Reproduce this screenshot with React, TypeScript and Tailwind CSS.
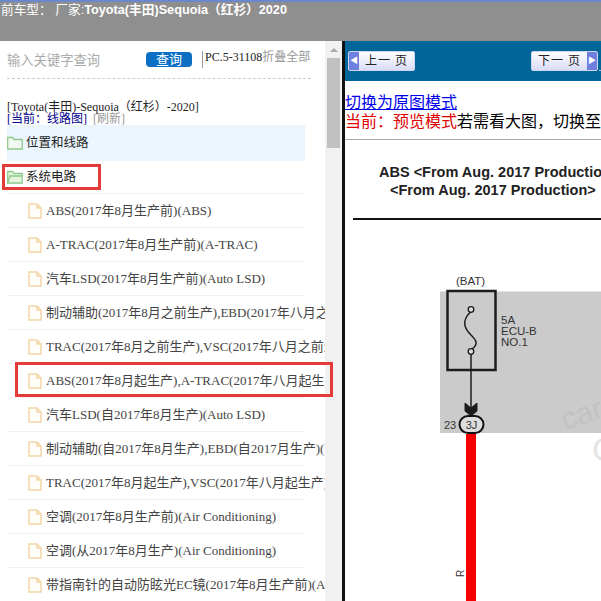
import React from "react";

const files = [
  "ABS(2017年8月生产前)(ABS)",
  "A-TRAC(2017年8月生产前)(A-TRAC)",
  "汽车LSD(2017年8月生产前)(Auto LSD)",
  "制动辅助(2017年8月之前生产),EBD(2017年八月之前生产)",
  "TRAC(2017年8月之前生产),VSC(2017年八月之前生产)",
  "ABS(2017年8月起生产),A-TRAC(2017年八月起生产)",
  "汽车LSD(自2017年8月生产)(Auto LSD)",
  "制动辅助(自2017年8月生产),EBD(自2017月生产)(EBD)",
  "TRAC(2017年8月起生产),VSC(2017年八月起生产)",
  "空调(2017年8月生产前)(Air Conditioning)",
  "空调(从2017年8月生产)(Air Conditioning)",
  "带指南针的自动防眩光EC镜(2017年8月生产前)(Auto)",
];

const FolderIcon = ({ open }: { open?: boolean }) => (
  <svg width="16" height="14" viewBox="0 0 16 14" fill="none" stroke="#8fc98f" strokeWidth="1.3" className="shrink-0">
    <path d="M.7 13V1.500h5l1.500 2h8v9.500z" fill={open ? "#e6f4dc" : "#f2f9f2"} />
    {open && <path d="M.7 13 3 6h12.300" />}
  </svg>
);

const FileIcon = () => (
  <svg width="14" height="16" viewBox="0 0 14 16" fill="none" stroke="#f3d3a4" strokeWidth="1.4" className="shrink-0">
    <path d="M1 1h8l4 4v10H1z" fill="#fffdf8" />
    <path d="M9 1v4h4" />
  </svg>
);

const PageButton = ({ label, next }: { label: string; next?: boolean }) => (
  <div className={`flex h-[20px] w-[67px] shrink-0 items-center overflow-hidden rounded-[2px] border border-[#cfd5f0] bg-gradient-to-b from-white to-[#d8dcf6] ${next ? "flex-row-reverse" : ""}`}>
    <div className="flex h-full w-[10px] items-center justify-center bg-[#6f7fe0] text-[8px] leading-none text-white">
      {next ? "▶" : "◀"}
    </div>
    <div className="flex-1 whitespace-pre text-center text-[12px] leading-none tracking-[1px] text-[#222]">{label}</div>
  </div>
);

const Diagram = () => (
  <svg width="256" height="461" viewBox="345 140 256 461" className="block" style={{ fontFamily: "'Liberation Sans', sans-serif" }}>
    <rect x="440" y="291.500" width="161" height="141.500" fill="#cbcbcb" />
    <text x="379" y="177" fontSize="14.500" fontWeight="700" fill="#222">ABS &lt;From Aug. 2017 Production</text>
    <text x="390" y="195" fontSize="14.500" fontWeight="700" fill="#222">&lt;From Aug. 2017 Production&gt;</text>
    <rect x="353" y="218" width="248" height="2" fill="#111" />
    <text x="456" y="285" fontSize="11.500" fill="#333">(BAT)</text>
    <rect x="447.500" y="291" width="48" height="79" fill="none" stroke="#1c1c1c" strokeWidth="2.500" />
    <circle cx="471" cy="309.500" r="2.800" fill="#ddd" stroke="#1c1c1c" strokeWidth="1.300" />
    <circle cx="471" cy="351.500" r="2.800" fill="#ddd" stroke="#1c1c1c" strokeWidth="1.300" />
    <path d="M470.500 312C460 322 466 330 471 335S479 344 472 349" fill="none" stroke="#1c1c1c" strokeWidth="1.500" />
    <text x="501" y="324" fontSize="11.500" fill="#333">5A</text>
    <text x="501" y="335" fontSize="11.500" fill="#333">ECU-B</text>
    <text x="501" y="346" fontSize="11.500" fill="#333">NO.1</text>
    <path d="M471 354V408" stroke="#1c1c1c" strokeWidth="1.500" />
    <path d="M465 403 471 408 477 403V411L471 416 465 411z" fill="#1c1c1c" stroke="#1c1c1c" />
    <rect x="459.500" y="416" width="24" height="17" rx="8.500" fill="#ddd" stroke="#111" strokeWidth="2" />
    <text x="471.500" y="429" textAnchor="middle" fontSize="11" fill="#333">3J</text>
    <text x="444" y="429" fontSize="11" fill="#333">23</text>
    <rect x="466" y="434" width="10" height="167" fill="#f40000" />
    <text x="0" y="0" fontSize="10" fill="#333" transform="translate(464 577) rotate(-90)">R</text>
    <text x="0" y="0" fontSize="30" fill="#c2c2c2" transform="translate(565 430) rotate(-18)">car</text>
    <text x="592" y="461" fontSize="34" fill="#e4e4e4">C</text>
  </svg>
);

export default function App() {
  return (
    <div
      className="relative flex h-[601px] w-[601px] flex-col overflow-hidden bg-white text-[13px]"
      style={{ fontFamily: "'Liberation Serif', 'Noto Sans CJK SC', serif" }}
    >
      {/* top bar */}
      <div className="h-[41px] shrink-0 border-t-[2px] border-[#6c88cc] bg-[#8f8f8f] pl-px text-[12.700px] leading-[16px] text-white">
        <div className="whitespace-nowrap" style={{ fontFamily: "'Liberation Sans', 'Noto Sans CJK SC', sans-serif" }}>
          前车型： 厂家:<span className="font-bold">Toyota(丰田)Sequoia（红杉）2020</span>
        </div>
      </div>

      <div className="flex min-h-0 flex-1">
        {/* left panel */}
        <div className="w-[325px] shrink-0 overflow-hidden pl-[7px]">
          <div className="flex h-[38px] w-[304px] items-start border-b border-dashed border-[#ccc]">
            <span className="mt-[13px] w-[139px] shrink-0 text-[13.300px] leading-[13px] text-[#aaa]">输入关键字查询</span>
            <span className="mt-[11px] flex h-[15px] w-[46px] shrink-0 items-center justify-center rounded-[4px] bg-[#0b6fc4] text-[13px] text-white">查询</span>
            <span className="ml-[10px] mt-[10px] h-[17px] shrink-0 whitespace-nowrap border-l border-[#999] pl-[2px] text-[12px] leading-[12px] text-[#222]">
              PC.5-31108<span className="text-[#999]">折叠全部</span>
            </span>
          </div>
          <div className="mt-[22px] whitespace-nowrap text-[12px] leading-[12px] text-[#222]">[Toyota(丰田)-Sequoia（红杉）-2020]</div>
          <div className="whitespace-pre text-[12px] leading-[12px] text-[#999]">
            <span className="text-[#00008b]">[当前：线路图]</span>{"  "}[刷新]
          </div>
          <div className="flex h-[36px] w-[298px] items-center gap-[3px] bg-[#eaf5fd] text-[12.500px] text-[#222]">
            <FolderIcon />
            位置和线路
          </div>
          <div className="flex h-[33px] w-[298px] items-center gap-[3px] border-b border-[#f1f1f1] text-[12.500px] text-[#222]">
            <FolderIcon open />
            系统电路
          </div>
          <div className="ml-px w-[296px]">
            {files.map((name) => (
              <div key={name} className="flex h-[34px] items-center gap-[4px] border-b border-[#f1f1f1] pl-[20px] text-[#444]">
                <FileIcon />
                <span className="w-[279px] shrink-0 overflow-hidden whitespace-nowrap text-[13px]">{name}</span>
              </div>
            ))}
          </div>
        </div>

        {/* scrollbar */}
        <div className="flex w-[17px] shrink-0 flex-col items-center bg-[#f1f1f1]">
          <div className="mt-[7px] h-0 w-0 border-x-[4px] border-b-[4px] border-x-transparent border-b-[#aaa]" />
          <div className="mt-[6px] h-[90px] w-[13px] bg-[#c1c1c1]" />
        </div>

        {/* right panel */}
        <div className="flex min-w-0 flex-1 flex-col overflow-hidden border-l-[3px] border-[#111]">
          <div className="flex h-[40px] w-[256px] shrink-0 items-center bg-[#006699] pl-[3px]">
            <PageButton label="上一 页" />
            <div className="w-[116px] shrink-0" />
            <PageButton label="下一 页" next />
            <div className="ml-[1px] mt-[18px] h-px w-[3px] shrink-0 bg-[#9db8e8]" />
          </div>
          <div className="flex h-[59px] shrink-0 flex-col justify-end border-b border-[#aaa] pb-[8px] text-[16px] leading-[19px]">
            <a className="w-fit whitespace-nowrap text-[#0000ee] underline">切换为原图模式</a>
            <div className="whitespace-nowrap">
              <span className="text-[#e00000]">当前：预览模式</span>若需看大图，切换至原图模式
            </div>
          </div>
          <Diagram />
        </div>
      </div>

      {/* red annotation boxes */}
      <div className="absolute left-[2px] top-[164px] h-[26px] w-[99px] border-[3px] border-[#e33a3a]" />
      <div className="absolute left-[15px] top-[362px] h-[35px] w-[318px] border-[3px] border-[#e33a3a]" />
    </div>
  );
}
